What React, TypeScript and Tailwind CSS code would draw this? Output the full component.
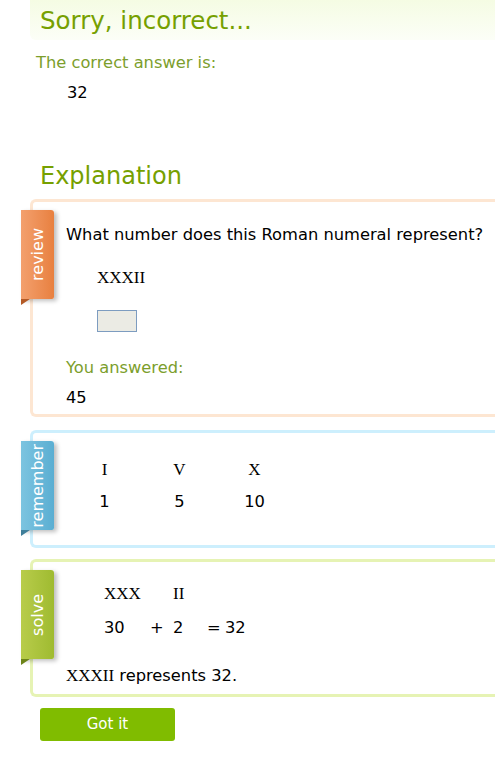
import React from 'react';

const sans = 'font-["DejaVu_Sans",Verdana,sans-serif]';
const serif = 'font-["Liberation_Serif","Times_New_Roman",serif]';

const ribbonStyles = {
  review: {
    bg: 'bg-gradient-to-r from-[#f3a06d] to-[#e8803f]',
    fold: 'border-t-[#b45a26]',
    border: 'border-[#fde6d2]',
  },
  remember: {
    bg: 'bg-gradient-to-r from-[#7cc4e0] to-[#5aaed2]',
    fold: 'border-t-[#3f7f9a]',
    border: 'border-[#cdeffd]',
  },
  solve: {
    bg: 'bg-gradient-to-r from-[#b8cc4a] to-[#9fbb30]',
    fold: 'border-t-[#6d8419]',
    border: 'border-[#e6f3b4]',
  },
};

function Ribbon({ label, kind }: { label: string; kind: keyof typeof ribbonStyles }) {
  const s = ribbonStyles[kind];
  return (
    <div className="absolute -left-[12px] top-[8px]">
      <div
        className={`${s.bg} w-[33px] h-[89px] rounded-tr-[3px] rounded-br-[2px] shadow-[3px_2px_4px_rgba(0,0,0,0.25)] flex items-center justify-center`}>
        <span className="[writing-mode:vertical-rl] rotate-180 text-white text-[16px] leading-none">
          {label}
        </span>
      </div>
      {/* folded corner */}
      <div className={`w-0 h-0 border-t-[6px] ${s.fold} border-r-[9px] border-r-transparent`}></div>
    </div>
  );
}

function Panel({
  label,
  kind,
  className = '',
  children,
}: {
  label: string;
  kind: keyof typeof ribbonStyles;
  className?: string;
  children: React.ReactNode;
}) {
  return (
    <div className={`relative ml-[30px] border-[3px] border-r-0 rounded-l-[6px] ${ribbonStyles[kind].border} ${className}`}>
      <Ribbon label={label} kind={kind} />
      {children}
    </div>
  );
}

export default function App() {
  return (
    <div className={`${sans} w-[495px] h-[762px] overflow-hidden bg-white text-black`}>
      {/* Result header */}
      <div className="ml-[30px] h-[40px] rounded-bl-[6px] bg-gradient-to-b from-[#f5fce3] to-[#fcfef7] pl-[10px] pt-[6px]">
        <h1 className="text-[24.5px] leading-[30px] text-[#76a000]">Sorry, incorrect...</h1>
      </div>

      <p className="ml-[36px] mt-[13px] text-[16.3px] leading-[20px] text-[#7c9e2c]">The correct answer is:</p>
      <p className="ml-[67px] mt-[10px] text-[16.3px] leading-[20px]">32</p>

      <h2 className="ml-[40px] mt-[58px] text-[24px] leading-[30px] text-[#76a000]">Explanation</h2>

      {/* review */}
      <Panel label="review" kind="review" className="mt-[8px] h-[218px] pl-[33px] pt-[23px]">
        <p className="text-[16.3px] leading-[20px] whitespace-nowrap">What number does this Roman numeral represent?</p>
        <p className={`${serif} ml-[31px] mt-[23px] text-[17px] leading-[20px]`}>XXXII</p>
        <div className="ml-[31px] mt-[22px] w-[40px] h-[22px] bg-[#ebebe4] border-[1px] border-[#7d9cc0]"></div>
        <p className="mt-[26px] text-[16.3px] leading-[20px] text-[#7c9e2c]">You answered:</p>
        <p className="mt-[10px] text-[16.3px] leading-[20px]">45</p>
      </Panel>

      {/* remember */}
      <Panel label="remember" kind="remember" className="mt-[13px] h-[118px] pl-[34px] pt-[27px]">
        <div className="grid grid-cols-[75px_75px_75px] gap-y-[12px] text-[16.3px] leading-[20px] text-center">
          <span className={serif + ' text-[17px]'}>I</span>
          <span className={serif + ' text-[17px]'}>V</span>
          <span className={serif + ' text-[17px]'}>X</span>
          <span>1</span>
          <span>5</span>
          <span>10</span>
        </div>
      </Panel>

      {/* solve */}
      <Panel label="solve" kind="solve" className="mt-[11px] h-[138px] pl-[33px] pt-[22px]">
        <div className="ml-[38px] flex text-[17px] leading-[20px]">
          <span className={`${serif} w-[69px]`}>XXX</span>
          <span className={serif}>II</span>
        </div>
        <div className="ml-[38px] mt-[14px] flex text-[16.3px] leading-[20px]">
          <span className="w-[46px]">30</span>
          <span className="w-[23px]">+</span>
          <span className="w-[34px]">2</span>
          <span className="w-[18px]">=</span>
          <span>32</span>
        </div>
        <p className="mt-[28px] text-[16.3px] leading-[20px]">
          <span className={`${serif} text-[17px]`}>XXXII</span> represents 32.
        </p>
      </Panel>

      <button className="ml-[40px] mt-[11px] w-[135px] h-[33px] rounded-[3px] bg-[#80bc00] text-white text-[15px]">
        Got it
      </button>
    </div>
  );
}
